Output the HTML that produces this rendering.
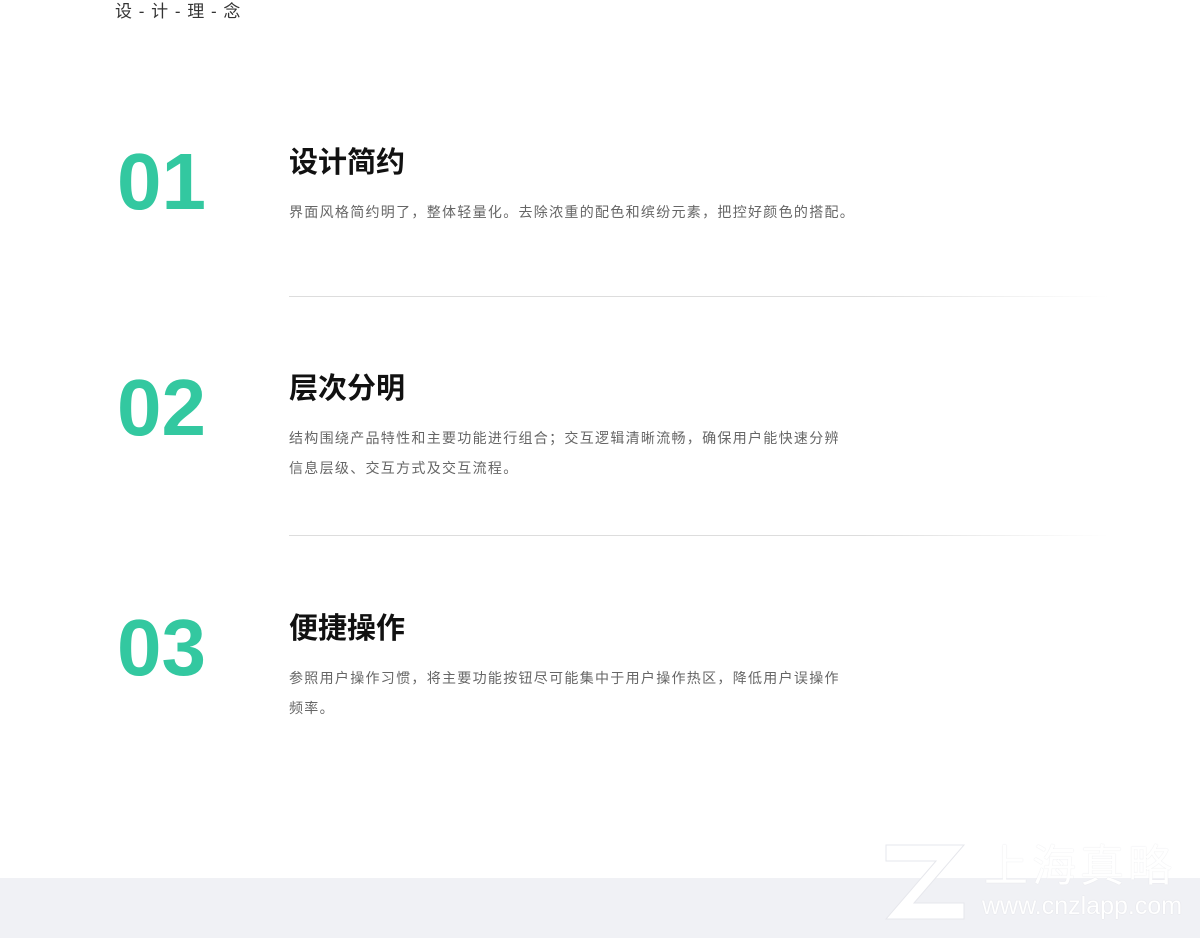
<!DOCTYPE html>
<html><head><meta charset="utf-8"><style>
body{margin:0;width:1200px;height:938px;background:#fff;position:relative;overflow:hidden;font-family:"Liberation Sans","Noto Sans CJK SC",sans-serif}
.a{position:absolute}
.hd{left:115px;top:0;font-size:17px;color:#333;letter-spacing:1px;line-height:24px}
.num{left:117px;font-size:80px;font-weight:bold;color:#33c8a0;line-height:80px;font-family:"Liberation Sans",Arial,sans-serif}
.t{left:289px;font-size:29px;font-weight:bold;color:#111;line-height:36px}
.d{left:289px;font-size:14px;color:#666;line-height:30px;width:700px;letter-spacing:1.3px;white-space:nowrap}
.ln{left:289px;width:820px;height:1px;background:linear-gradient(90deg,#ddd 70%,rgba(221,221,221,0))}
.ft{left:0;top:878px;width:1200px;height:60px;background:#f0f1f5}
</style></head><body>
<div class="a hd">设 - 计 - 理 - 念</div>
<div class="a num" style="top:142px">01</div>
<div class="a t" style="top:145px">设计简约</div>
<div class="a d" style="top:197px">界面风格简约明了，整体轻量化。去除浓重的配色和缤纷元素，把控好颜色的搭配。</div>
<div class="a ln" style="top:296px"></div>
<div class="a num" style="top:368px">02</div>
<div class="a t" style="top:371px">层次分明</div>
<div class="a d" style="top:423px">结构围绕产品特性和主要功能进行组合；交互逻辑清晰流畅，确保用户能快速分辨<br>信息层级、交互方式及交互流程。</div>
<div class="a ln" style="top:535px"></div>
<div class="a num" style="top:608px">03</div>
<div class="a t" style="top:611px">便捷操作</div>
<div class="a d" style="top:663px">参照用户操作习惯，将主要功能按钮尽可能集中于用户操作热区，降低用户误操作<br>频率。</div>
<div class="a ft"></div>
<svg class="a" style="left:884px;top:843px" width="82" height="78"><path d="M2 2H80L30 60H80V76H2L52 18H2Z" fill="#fff" stroke="#e6e7ec"/></svg>
<div class="a" style="left:984px;top:842px;font-size:44px;color:#fff;letter-spacing:4px;text-shadow:0 0 1px #d8d9de;line-height:50px">上海真略</div>
<div class="a" style="left:982px;top:892px;font-size:25px;color:#fff;text-shadow:0 0 1px #d0d1d6;line-height:28px">www.cnzlapp.com</div>
</body></html>
